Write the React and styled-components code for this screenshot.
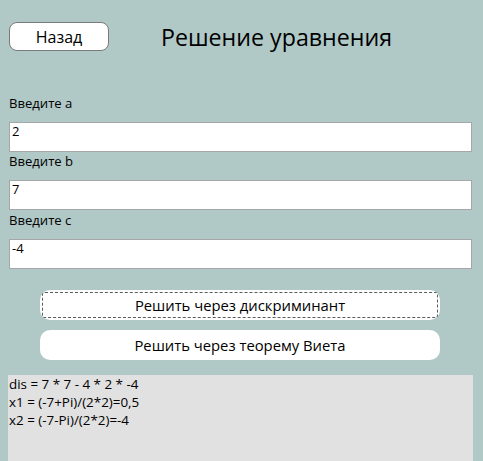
import React from "react";
import styled, { createGlobalStyle } from "styled-components";

const Global = createGlobalStyle`
  html, body {
    margin: 0;
    padding: 0;
    overflow: hidden;
    background: #b0c9c6;
  }
  body {
    font-family: "Open Sans", "Noto Sans", sans-serif;
    color: #000;
  }
`;

const Page = styled.div`
  display: flex;
  flex-direction: column;
  padding: 22px 11px 0 9px;
  width: 483px;
  height: 461px;
  box-sizing: border-box;
`;

const Header = styled.div`
  display: flex;
  align-items: center;
  gap: 52px;
  height: 29px;
`;

const BackButton = styled.button`
  width: 100px;
  height: 29px;
  box-sizing: border-box;
  background: #fff;
  border: 1px solid #7a7a7a;
  border-radius: 8px;
  font-family: inherit;
  font-size: 16px;
  color: #000;
  padding: 0;
  cursor: pointer;
`;

const Title = styled.h1`
  margin: 0;
  font-size: 23.2px;
  font-weight: 400;
  line-height: 29px;
  position: relative;
  top: 1px;
`;

const Form = styled.div`
  display: flex;
  flex-direction: column;
  margin-top: 43px;
`;

const Label = styled.div`
  font-size: 13.1px;
  line-height: 18px;
  height: 28px;
  box-sizing: border-box;
`;

const Field = styled.input`
  width: 463px;
  height: 30px;
  box-sizing: border-box;
  border: 1px solid #a6a6a6;
  background: #fff;
  font-family: inherit;
  font-size: 13px;
  padding: 0 2px 12px 2px;
  margin: 0 0 ${(p) => p.$gap || 0}px 0;
  color: #000;
  outline: none;
`;

const Actions = styled.div`
  display: flex;
  flex-direction: column;
  align-items: center;
  gap: 10px;
  margin-top: 21px;
  padding-right: 1px;
`;

const ActionButton = styled.button`
  position: relative;
  width: 400px;
  height: 30px;
  border: none;
  border-radius: 10px;
  background: #fff;
  font-family: inherit;
  font-size: 14.8px;
  color: #000;
  padding: 0;
  cursor: pointer;
  outline: none;

  &::after {
    content: "";
    display: ${(p) => (p.$focused ? "block" : "none")};
    position: absolute;
    inset: 2px;
    border: 1px dashed #5a5a5a;
    border-radius: 3px;
    pointer-events: none;
  }
`;

const Output = styled.div`
  margin: 15px 0 0 -1px;
  width: 465px;
  flex: 1;
  box-sizing: border-box;
  background: #e1e1e1;
  padding: 0 0 0 1px;
  font-size: 13.4px;
  line-height: 18px;
  white-space: pre;
`;

export default function App() {
  return (
    <>
      <Global />
      <Page>
        <Header>
          <BackButton>Назад</BackButton>
          <Title>Решение уравнения</Title>
        </Header>
        <Form>
          <Label>Введите a</Label>
          <Field defaultValue="2" />
          <Label>Введите b</Label>
          <Field defaultValue="7" $gap={1} />
          <Label>Введите c</Label>
          <Field defaultValue="-4" />
        </Form>
        <Actions>
          <ActionButton $focused>Решить через дискриминант</ActionButton>
          <ActionButton>Решить через теорему Виета</ActionButton>
        </Actions>
        <Output>
          {"dis = 7 * 7 - 4 * 2 * -4\nx1 = (-7+Pi)/(2*2)=0,5\nx2 = (-7-Pi)/(2*2)=-4"}
        </Output>
      </Page>
    </>
  );
}
